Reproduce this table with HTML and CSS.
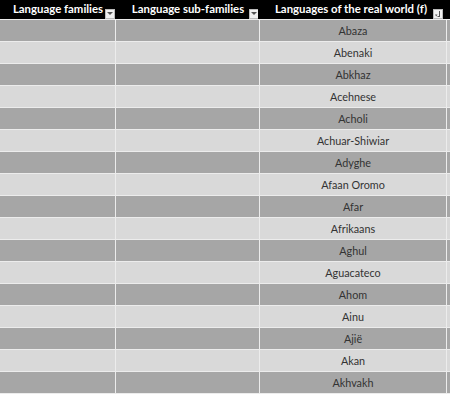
FILE: index.html
```html
<!DOCTYPE html>
<html>
<head>
<meta charset="utf-8">
<link rel="stylesheet" href="styles.css">
</head>
<body>
<div class="sheet">
  <div class="row head">
    <div class="cell"><span>Language families</span><span class="btn"><svg width="6" height="4" viewBox="0 0 6 4"><path d="M0 0H6L3 3Z" fill="#555"/></svg></span></div>
    <div class="cell"><span>Language sub-families</span><span class="btn"><svg width="6" height="4" viewBox="0 0 6 4"><path d="M0 0H6L3 3Z" fill="#555"/></svg></span></div>
    <div class="cell"><span>Languages of the real world (f)</span><span class="btn"><svg width="8" height="8" viewBox="0 0 8 8"><path d="M1 4.5H3.5L2.25 6.5Z" fill="#555"/><rect x="5" y="1" width="1" height="6" fill="#555"/><rect x="3.5" y="6" width="2" height="1" fill="#555"/></svg></span></div>
    <div class="cell"></div>
  </div>
  <div class="row dark"><div class="cell"></div><div class="cell"></div><div class="cell">Abaza</div><div class="cell"></div></div>
  <div class="row light"><div class="cell"></div><div class="cell"></div><div class="cell">Abenaki</div><div class="cell"></div></div>
  <div class="row dark"><div class="cell"></div><div class="cell"></div><div class="cell">Abkhaz</div><div class="cell"></div></div>
  <div class="row light"><div class="cell"></div><div class="cell"></div><div class="cell">Acehnese</div><div class="cell"></div></div>
  <div class="row dark"><div class="cell"></div><div class="cell"></div><div class="cell">Acholi</div><div class="cell"></div></div>
  <div class="row light"><div class="cell"></div><div class="cell"></div><div class="cell">Achuar-Shiwiar</div><div class="cell"></div></div>
  <div class="row dark"><div class="cell"></div><div class="cell"></div><div class="cell">Adyghe</div><div class="cell"></div></div>
  <div class="row light"><div class="cell"></div><div class="cell"></div><div class="cell">Afaan Oromo</div><div class="cell"></div></div>
  <div class="row dark"><div class="cell"></div><div class="cell"></div><div class="cell">Afar</div><div class="cell"></div></div>
  <div class="row light"><div class="cell"></div><div class="cell"></div><div class="cell">Afrikaans</div><div class="cell"></div></div>
  <div class="row dark"><div class="cell"></div><div class="cell"></div><div class="cell">Aghul</div><div class="cell"></div></div>
  <div class="row light"><div class="cell"></div><div class="cell"></div><div class="cell">Aguacateco</div><div class="cell"></div></div>
  <div class="row dark"><div class="cell"></div><div class="cell"></div><div class="cell">Ahom</div><div class="cell"></div></div>
  <div class="row light"><div class="cell"></div><div class="cell"></div><div class="cell">Ainu</div><div class="cell"></div></div>
  <div class="row dark"><div class="cell"></div><div class="cell"></div><div class="cell">Ajië</div><div class="cell"></div></div>
  <div class="row light"><div class="cell"></div><div class="cell"></div><div class="cell">Akan</div><div class="cell"></div></div>
  <div class="row dark"><div class="cell"></div><div class="cell"></div><div class="cell">Akhvakh</div><div class="cell"></div></div>
</div>
</body>
</html>
```
FILE: styles.css
```css
html, body {
  margin: 0;
  padding: 0;
  background: #ececec;
  overflow: hidden;
}
.sheet {
  display: flex;
  flex-direction: column;
  gap: 1px;
  font-family: Lato, "Open Sans", sans-serif;
}
.row {
  display: grid;
  grid-template-columns: 115px 143px 186px 1fr;
  column-gap: 1px;
  height: 21px;
}
.row .cell {
  display: flex;
  align-items: center;
  justify-content: center;
  font-size: 10.8px;
  color: #333;
  white-space: nowrap;
}
.dark .cell { background: #a6a6a6; }
.light .cell { background: #d9d9d9; }
.head { height: 19px; column-gap: 0; }
.head .cell {
  background: #000;
  color: #fff;
  font-weight: bold;
  font-size: 11.4px;
  position: relative;
  padding-bottom: 2px;
  box-sizing: border-box;
}
.head .cell:nth-child(1) { width: 116px; }
.head .cell:nth-child(2) { width: 144px; margin-left: 1px; }
.head .btn {
  position: absolute;
  right: 1px;
  bottom: 0;
  width: 10px;
  height: 10px;
  background: #f0f0f0;
  border: 1px solid #bbb;
  box-sizing: border-box;
  display: flex;
  align-items: center;
  justify-content: center;
}
```
